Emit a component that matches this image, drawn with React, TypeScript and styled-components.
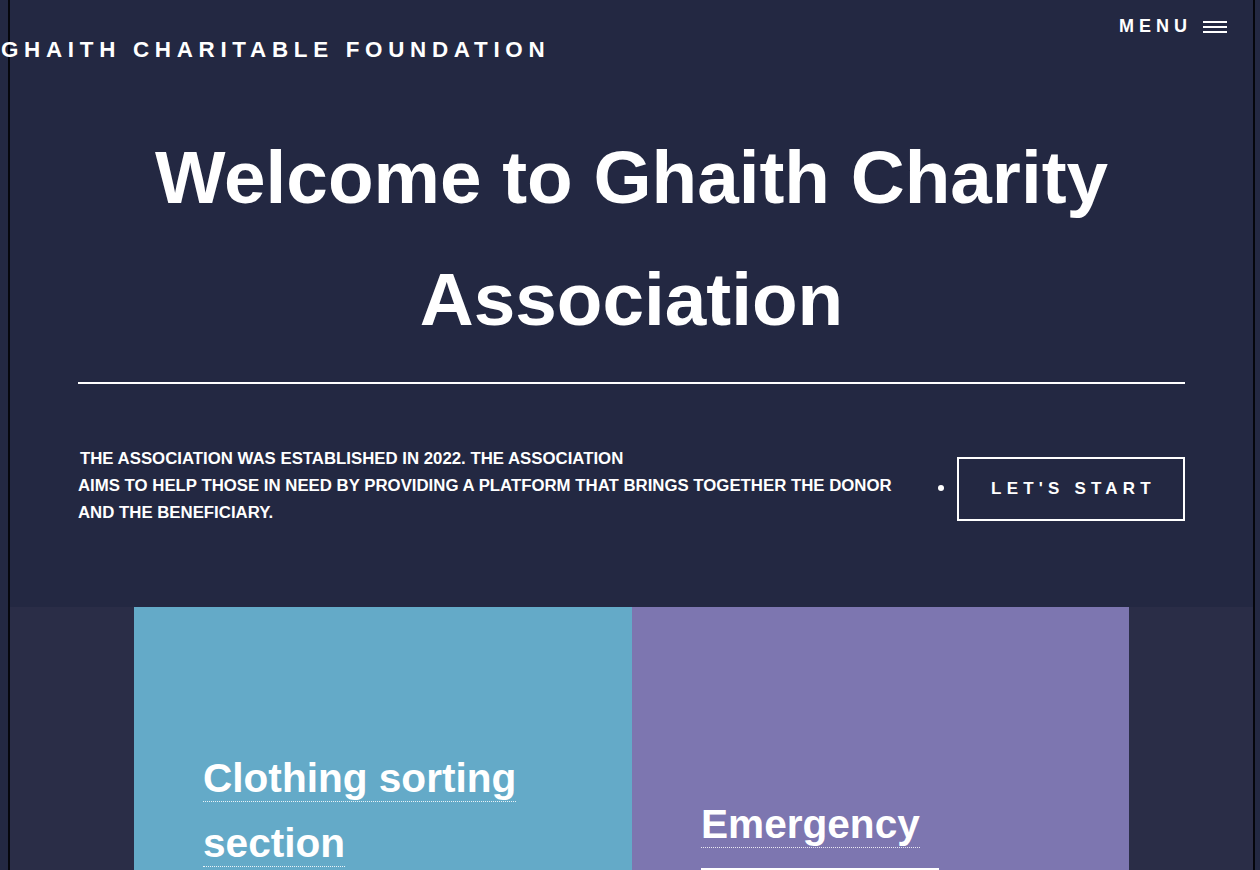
import React from "react";
import styled, { createGlobalStyle } from "styled-components";

const GlobalStyle = createGlobalStyle`
  html, body {
    margin: 0;
    padding: 0;
    background: #232842;
  }
  body {
    font-family: "Liberation Sans", Arial, sans-serif;
    color: #ffffff;
  }
  * { box-sizing: border-box; }
`;

const Frame = styled.div`
  margin-left: 8px;
  width: 1247px;
  min-height: 100vh;
  border-left: 2px solid #05060c;
  border-right: 2px solid #05060c;
`;

const Hero = styled.section`
  background: #232842;
  padding-bottom: 81px;
`;

const Header = styled.header`
  display: flex;
  justify-content: space-between;
  align-items: flex-start;
`;

const Logo = styled.a`
  display: block;
  margin: 37px 0 0 -9px;
  font-size: 22.4px;
  line-height: 26px;
  font-weight: 700;
  letter-spacing: 5.7px;
  color: #ffffff;
  text-decoration: none;
  white-space: nowrap;
`;

const MenuButton = styled.button`
  display: flex;
  align-items: center;
  gap: 11px;
  margin: 16px 26px 0 0;
  padding: 0;
  border: none;
  background: none;
  color: #ffffff;
  font-family: inherit;
  font-size: 18px;
  line-height: 21px;
  font-weight: 700;
  letter-spacing: 5px;
  cursor: pointer;
`;

const Burger = styled.span`
  display: flex;
  flex-direction: column;
  gap: 3px;
  width: 24px;
  margin-top: 1px;
`;

const BurgerLine = styled.span`
  display: block;
  height: 2px;
  background: #ffffff;
`;

const Title = styled.h1`
  margin: 53px 0 0;
  text-align: center;
  font-size: 74.7px;
  line-height: 122px;
  font-weight: 700;
  color: #ffffff;
`;

const Rule = styled.hr`
  margin: 22px 68px 0;
  border: none;
  border-top: 2px solid #ffffff;
  height: 0;
`;

const IntroRow = styled.div`
  display: flex;
  justify-content: space-between;
  align-items: flex-start;
  margin-top: 61px;
  padding: 0 68px;
`;

const Intro = styled.p`
  margin: 0;
  font-size: 16.8px;
  line-height: 27px;
  font-weight: 700;
  text-transform: uppercase;
  white-space: nowrap;
`;

const FirstLine = styled.span`
  padding-left: 2px;
`;

const ActionList = styled.ul`
  margin: 12px 0 0;
  padding: 0;
  list-style: disc;
  font-size: 20px;
  font-weight: 700;
  color: #ffffff;
`;

const StartButton = styled.a`
  display: flex;
  align-items: center;
  justify-content: center;
  width: 228px;
  height: 64px;
  padding-left: 5px;
  border: 2px solid #ffffff;
  color: #ffffff;
  font-size: 17px;
  font-weight: 700;
  letter-spacing: 5.2px;
  text-decoration: none;
  white-space: nowrap;
`;

const Cards = styled.section`
  display: flex;
  justify-content: center;
  background: #2a2d47;
  min-height: 400px;
`;

const Card = styled.article<{ $bg: string; $top: number; $w: number }>`
  width: ${(p) => p.$w}px;
  background: ${(p) => p.$bg};
  padding: ${(p) => p.$top}px 60px 80px 69px;
`;

const CardTitle = styled.h2`
  margin: 0;
  font-size: 40.6px;
  line-height: 65px;
  font-weight: 700;
`;

const CardLink = styled.a`
  color: #ffffff;
  text-decoration: none;
  border-bottom: 1px dotted rgba(255, 255, 255, 0.85);
`;

const CardButton = styled.a`
  display: flex;
  align-items: center;
  justify-content: center;
  width: 238px;
  height: 60px;
  margin-top: 11px;
  border: 2px solid #ffffff;
  color: #ffffff;
  font-size: 16px;
  font-weight: 700;
  letter-spacing: 4px;
  text-decoration: none;
`;

export default function App() {
  return (
    <>
      <GlobalStyle />
      <Frame>
        <Hero>
          <Header>
            <Logo href="#">GHAITH CHARITABLE FOUNDATION</Logo>
            <MenuButton>
              MENU
              <Burger>
                <BurgerLine />
                <BurgerLine />
                <BurgerLine />
              </Burger>
            </MenuButton>
          </Header>
          <Title>
            Welcome to Ghaith Charity
            <br />
            Association
          </Title>
          <Rule />
          <IntroRow>
            <Intro>
              <FirstLine>The association was established in 2022. The association</FirstLine>
              <br />
              aims to help those in need by providing a platform that brings together the donor
              <br />
              and the beneficiary.
            </Intro>
            <ActionList>
              <li>
                <StartButton href="#">LET'S START</StartButton>
              </li>
            </ActionList>
          </IntroRow>
        </Hero>
        <Cards>
          <Card $bg="#64aac8" $top={139} $w={498}>
            <CardTitle>
              <CardLink href="#">Clothing sorting section</CardLink>
            </CardTitle>
            <CardButton href="#">VIEW</CardButton>
          </Card>
          <Card $bg="#7d76b0" $top={185} $w={497}>
            <CardTitle>
              <CardLink href="#">Emergency</CardLink>
            </CardTitle>
            <CardButton href="#">VIEW</CardButton>
          </Card>
        </Cards>
      </Frame>
    </>
  );
}
